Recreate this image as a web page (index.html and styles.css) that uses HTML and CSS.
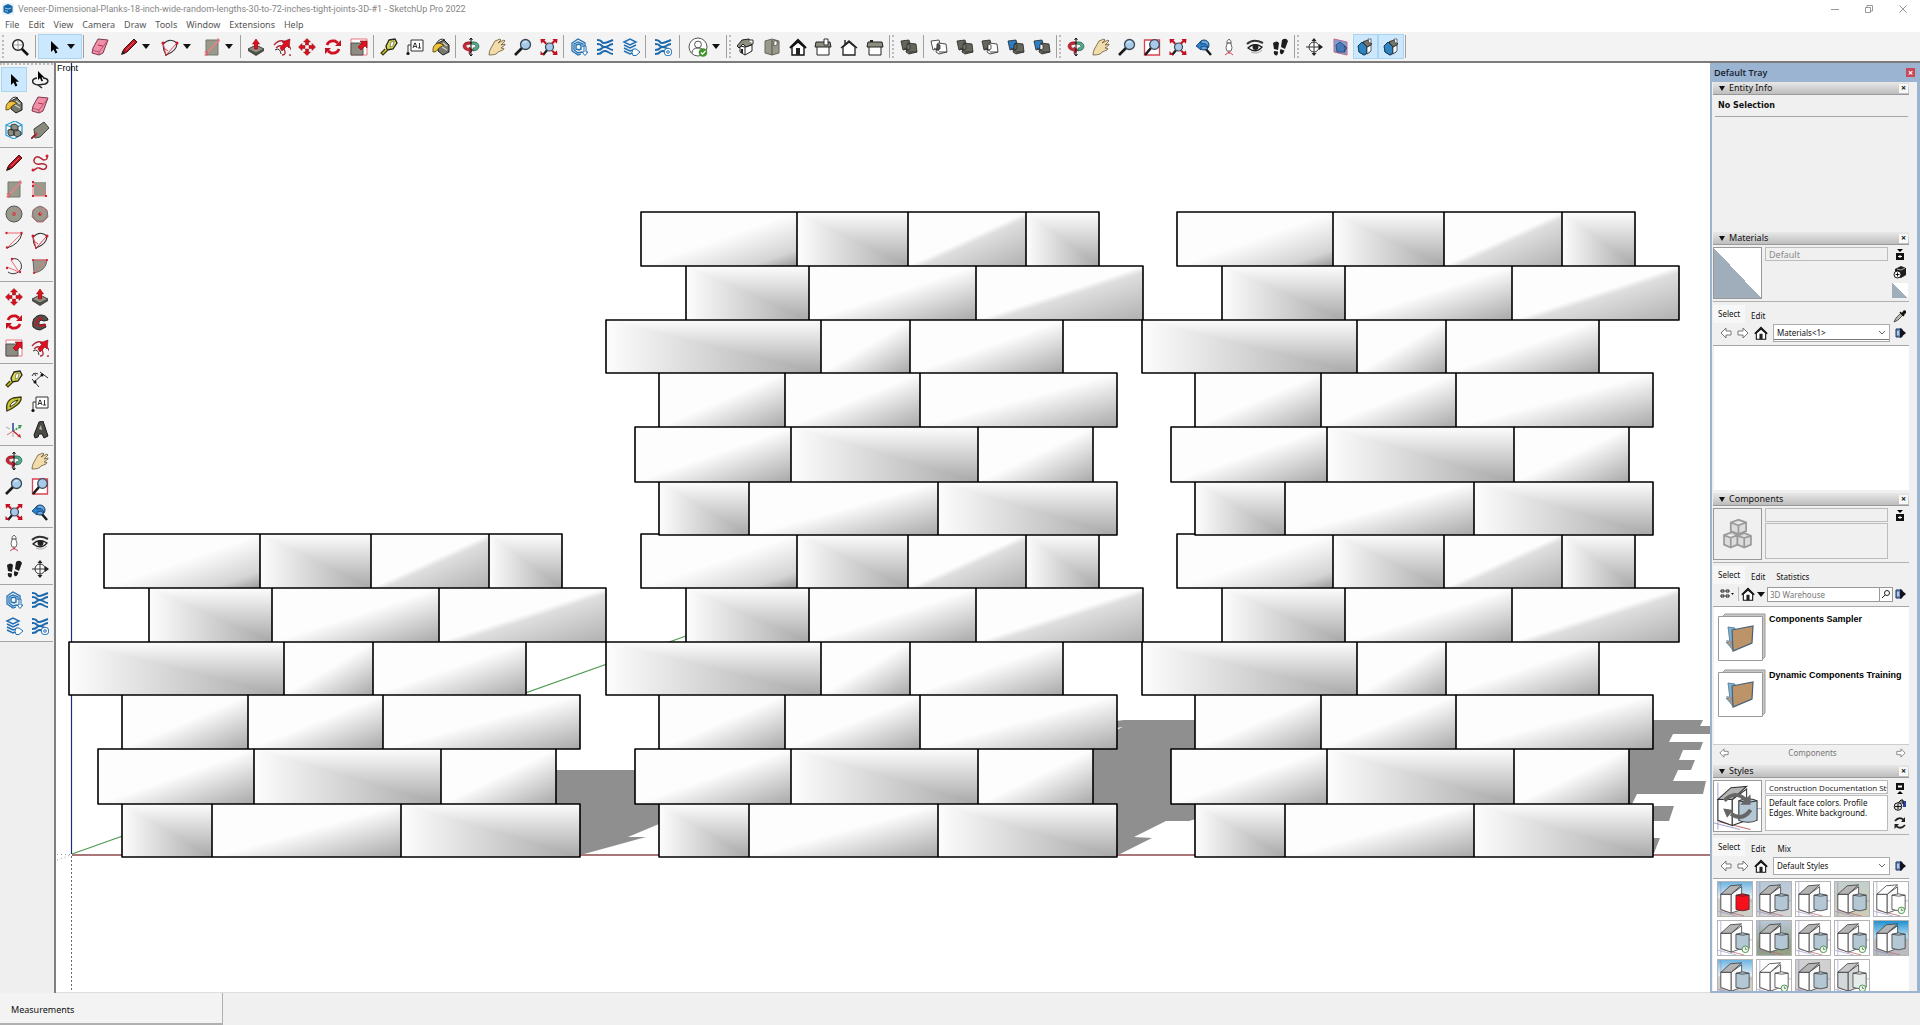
FILE: index.html
```html
<!DOCTYPE html>
<html lang="en">
<head>
<meta charset="utf-8">
<title>Veneer-Dimensional-Planks - SketchUp Pro 2022</title>
<link rel="stylesheet" href="styles.css">
</head>
<body>
<svg class="sprite" aria-hidden="true">
  <symbol id="search" viewBox="0 0 18 18"><circle cx="7" cy="7" r="5.3" fill="#fff" stroke="#222" stroke-width="1.5"/><path d="M7 3v8M3 7h8" stroke="#888" stroke-width=".8"/><path d="M11 11l6 6" stroke="#111" stroke-width="2.6"/></symbol>
  <symbol id="cursor" viewBox="0 0 18 18"><path d="M6 3v11l2.600-2.400 1.800 4 2-1-1.800-3.800H14z" fill="#000"/></symbol>
  <symbol id="lasso" viewBox="0 0 18 18"><path d="M6 7C0 8 0 13 7 14l7-1c5-2 3-6-2-6M7 14l4 3" fill="none" stroke="#222" stroke-width="1.500"/><path d="M7 0v9l2-2 1.500 3.500 1.500-.7L10.500 6.500h3z" fill="#000"/></symbol>
  <symbol id="eraser" viewBox="0 0 18 18"><path d="M7 1l10 1-5 13-4 2-7-2 1-5z" fill="#f08fa8" stroke="#7c3a4c"/><path d="M1 12l7 2 9-12M8 14v3" fill="none" stroke="#a34d64" stroke-width=".8"/><path d="M7 7l5 1" stroke="#b03050"/></symbol>
  <symbol id="pencil" viewBox="0 0 18 18"><path d="M2 16l2-5L14 1l3 3L7 14z" fill="#c01522" stroke="#421010"/><path d="M1 17l1.500-4.500 3 3z" fill="#2b2018"/><path d="M6 12l8-8" stroke="#f07070" stroke-width=".8"/></symbol>
  <symbol id="free" viewBox="0 0 18 18"><path d="M2 16c2 1 3-3 6-2s5 3 7 0-2-5-6-4-8-2-5-6 7 2 9 2 4-1 3-4" fill="none" stroke="#b02030" stroke-width="1.400"/><circle cx="2" cy="16" r="1.500" fill="#d02030"/><circle cx="16" cy="2" r="1.500" fill="#d02030"/></symbol>
  <symbol id="arc" viewBox="0 0 18 18"><path d="M2 6Q9-1 16 5Q16 13 5 17Q2 12 2 6" fill="none" stroke="#333" stroke-width="1.100"/><path d="M2 5l3 12L16 5M3 10l4 3" fill="none" stroke="#e04050"/><g fill="#d01828"><circle cx="2" cy="5" r="1.500"/><circle cx="16" cy="5" r="1.500"/><circle cx="5" cy="17" r="1"/></g></symbol>
  <symbol id="rect" viewBox="0 0 18 18"><path d="M3 2h12v15H3z" fill="#99998c" stroke="#77776c"/><path d="M2 17L16 2" stroke="#f08088" stroke-width="1.300"/><path d="M1.500 14h3v3h-3M14 1h2v3" fill="none" stroke="#e05060" stroke-width=".8"/></symbol>
  <symbol id="rrect" viewBox="0 0 18 18"><path d="M3 2h12v14H3z" fill="#99998c"/><path d="M2 4q11 2 12 12M2 2v14h13" fill="none" stroke="#ee7780"/><path d="M1 1h2v2H1zM1 15h2v2H1zM14 15h2v2h-2zM1 5h2v2H1z" fill="#d02030"/></symbol>
  <symbol id="circ" viewBox="0 0 18 18"><circle cx="9" cy="9" r="8" fill="#99998c" stroke="#555"/><path d="M9 9l5-5" stroke="#f07080"/><circle cx="9" cy="9" r="1.700" fill="#d02030"/><circle cx="9" cy="9" r=".6" fill="#fff"/></symbol>
  <symbol id="poly" viewBox="0 0 18 18"><path d="M9 1l7 4 1 7-5 5H6l-5-5 1-7z" fill="#99998c" stroke="#ec7078"/><circle cx="9" cy="9" r="7.500" fill="none" stroke="#777"/><circle cx="9" cy="9" r="1.700" fill="#d02030"/><path d="M9 9l5-5" stroke="#f07080"/></symbol>
  <symbol id="arc2" viewBox="0 0 18 18"><path d="M17 2Q15 13 2 17" fill="none" stroke="#333"/><path d="M1 2h16L2 17" fill="none" stroke="#ee6a76"/><g fill="#d02030"><circle cx="1.500" cy="2" r="1.200"/><circle cx="16.500" cy="2" r="1.200"/><circle cx="2" cy="16.500" r="1.200"/></g></symbol>
  <symbol id="arc4" viewBox="0 0 18 18"><path d="M7 2c6-2 11 4 9 10-3 5-9 6-13 3" fill="none" stroke="#333"/><path d="M6 3l8 12L2 10" fill="none" stroke="#ee6a76"/><g fill="#d02030"><circle cx="7" cy="2" r="1.200"/><circle cx="15" cy="15" r="1.200"/><circle cx="2" cy="11" r="1.200"/></g></symbol>
  <symbol id="pie" viewBox="0 0 18 18"><path d="M2 3h14Q15 14 3 16z" fill="#99998c" stroke="#666"/><path d="M3 15L16 3M2 3h14" stroke="#ee6a76"/><g fill="#d02030"><circle cx="2" cy="3" r="1.100"/><circle cx="16" cy="3" r="1.100"/><circle cx="3" cy="16" r="1.100"/></g></symbol>
  <symbol id="push" viewBox="0 0 18 18"><path d="M1 11l8-4 8 4-8 4z" fill="#8f8f84" stroke="#444"/><path d="M1 11v2l8 5 8-5v-2l-8 4z" fill="#4b4b44"/><path d="M7.500 11V6H5.500L9 1l3.500 5h-2v5z" fill="#e01020" stroke="#900" stroke-width=".6"/></symbol>
  <symbol id="offset" viewBox="0 0 18 18"><path d="M1 7Q9-2 16 8t0 9M3 10Q8 5 11 11t-2 6" fill="none" stroke="#b02838" stroke-width="1.300"/><path d="M2 12q5-3 6 4" fill="none" stroke="#333"/><path d="M7 10l4-5-2-1 8-3-1 9-2-2-5 5z" fill="#e01020" stroke="#7c0a12" stroke-width=".6"/></symbol>
  <symbol id="move" viewBox="0 0 18 18"><g fill="#d8101e" stroke="#8b0810" stroke-width=".5"><path d="M9 .5L12.500 4H10.500v3h-3V4h-2z"/><path d="M9 17.500L12.500 14H10.500v-3h-3v3h-2z"/><path d="M.5 9L4 5.500v2h3v3H4v2z"/><path d="M17.500 9L14 5.500v2h-3v3h3v2z"/></g></symbol>
  <symbol id="rot" viewBox="0 0 18 18"><path d="M3 7q2-5 8-4l3 2M15 11q-2 5-8 4l-3-2" fill="none" stroke="#d01020" stroke-width="2.800"/><path d="M17 2v6h-6zM1 16v-6h6z" fill="#c01020"/></symbol>
  <symbol id="follow" viewBox="0 0 18 18"><path d="M2 14Q0 4 9 2q7 0 8 5l-4 1-3-1q-3 1-2 5l6-1 1 3-6 3-4-1z" fill="#55504a" stroke="#222"/><path d="M5 13q-1-7 6-8M8 13l7-1" fill="none" stroke="#c41828" stroke-width="1.800"/></symbol>
  <symbol id="scale" viewBox="0 0 18 18"><path d="M1 1h16v16H1z" fill="#fff" stroke="#e87880"/><path d="M1 5h12v12H1z" fill="#8c8c80" stroke="#555"/><path d="M8 9l4-4-2-2h7v7l-2-2-4 4z" fill="#e01020" stroke="#7c0a12" stroke-width=".6"/></symbol>
  <symbol id="tape" viewBox="0 0 18 18"><path d="M9 2l6-1 2 4-4 6-6 1-1-4z" fill="#d9d84a" stroke="#222" stroke-width="1.300"/><path d="M11 4l3-1-1 5-3 1z" fill="#fff" stroke="#555" stroke-width=".6"/><path d="M5 11l-4 4 2 2 5-5" stroke="#3d3a10" stroke-width="1.200" fill="#c5bd30"/></symbol>
  <symbol id="text" viewBox="0 0 18 18"><path d="M5 2h12v11H5zM2 16V7h3" fill="#fff" stroke="#333"/><circle cx="2" cy="15.500" r="1.600" fill="#111"/><path d="M7 10l1.700-5h.6L11 10M7.500 8.500h3M13.500 5v5M12 10h3" fill="none" stroke="#222" stroke-width=".9"/></symbol>
  <symbol id="paint" viewBox="0 0 18 18"><path d="M6 5l6-3 5 5v7l-6 3-5-4z" fill="#77786d" stroke="#1c1c1c"/><path d="M1 14q-1-8 6-9l5 2-5 3q-3 5-6 4z" fill="#f0c13a" stroke="#4a3a08" stroke-width=".8"/><path d="M4 6q4-7 9-4" fill="none" stroke="#222"/><path d="M10 9l5 3M11 5l4 3" stroke="#d4d4c8" stroke-width="1.200"/></symbol>
  <symbol id="orbit" viewBox="0 0 18 18"><path d="M9 4Q2 3 1 8q0 4 6 5v3l4-4-4-3v2Q3 9 4 7l5-1z" fill="#d02334" stroke="#5a0a10" stroke-width=".5"/><path d="M9 4q8-1 8 5-1 4-6 4v-3q3 0 3-2t-5-2z" fill="#54ac8a" stroke="#124a38" stroke-width=".6"/><path d="M9 0v18M7.500 2L9 0l1.500 2M7.500 16L9 18l1.500-2" fill="none" stroke="#111"/></symbol>
  <symbol id="hand" viewBox="0 0 18 18"><path d="M1 17q0-4 2-7l4-7 5-2 1 1-3 3 6-3 1 1-4 4 4-1v1l-4 3 3 .5-1 1.500-5 2q-1 3-9 3z" fill="#f3dcab" stroke="#6b5838" stroke-width=".8"/></symbol>
  <symbol id="zoom" viewBox="0 0 18 18"><path d="M8 10l-7 7" stroke="#1a1a1a" stroke-width="2.600"/><circle cx="11.500" cy="6.500" r="5" fill="#a9c9e8" stroke="#384858" stroke-width="1.300"/><path d="M9 5q2-2 4-1" stroke="#e8f4ff" fill="none"/></symbol>
  <symbol id="zwin" viewBox="0 0 18 18"><path d="M1.500 2h15v15h-15z" fill="#fff" stroke="#d84450" stroke-width="1.300"/><path d="M8 10l-6 7" stroke="#1a1a1a" stroke-width="2.600"/><circle cx="11.500" cy="6.500" r="4.800" fill="#a9c9e8" stroke="#384858" stroke-width="1.300"/></symbol>
  <symbol id="zext" viewBox="0 0 18 18"><path d="M8 11l-5 6" stroke="#1a1a1a" stroke-width="2.200"/><circle cx="9.500" cy="9" r="4" fill="#a9c9e8" stroke="#384858" stroke-width="1.200"/><path d="M.5 1h5L4.500 2.500 7 5 5.500 6.500 3 4 1 5.500zM17.500 1h-5l1 1.500L11 5l1.500 1.500L15 4l2 1.500zM17.500 17h-5l1-1.500-2-2 1.500-1.500 2 2 2-1.500zM.5 13v4h4z" fill="#c41020"/></symbol>
  <symbol id="prev" viewBox="0 0 18 18"><path d="M10 10l6 7" stroke="#1a1a1a" stroke-width="2.400"/><circle cx="9" cy="7" r="5" fill="#68a8e0" stroke="#123c66"/><path d="M1 8l5-5v3q6-2 7 4-3-3-7-1v3z" fill="#2a80cc" stroke="#123c66" stroke-width=".8"/></symbol>
  <g id="waves"><path d="M1 2q4 0 5 2t6 0 5-2M1 6q4 0 5 2 3 2 6 0t5-2M1 12q4 0 5-2 3-2 6 0t5 2M1 16q4 0 5-2 3-2 6 0t5 2" fill="none" stroke="#1c68ad" stroke-width="1.900"/></g>
  <symbol id="wh" viewBox="0 0 18 18"><path d="M11 16l-3 1-6-4V5l6-4 7 4v4M12 14l-4 1-4-3V6l4-2 5 2v3" fill="none" stroke="#2270b4" stroke-width="1.300"/><path d="M6 7l3-1 2 1v4l-2 1-3-1z" fill="none" stroke="#2270b4" stroke-width="1.400"/><path d="M14 8v6h-2l3 3.500 3-3.500h-2V8z" fill="#fff" stroke="#2270b4"/></symbol>
  <symbol id="ext" viewBox="0 0 18 18"><use href="#waves"/></symbol>
  <symbol id="layers" viewBox="0 0 18 18"><path d="M2 4l6-3 6 3-6 3zM2 7l6 3 6-3M2 10l6 3 3-1M2 13l6 3 2-1" fill="none" stroke="#2270b4" stroke-width="1.500"/><path d="M11 11h3l4 3-4 3.500h-3q-2-3 0-6.500z" fill="#fff" stroke="#2270b4"/></symbol>
  <symbol id="extm" viewBox="0 0 18 18"><use href="#waves"/><circle cx="14" cy="14" r="3.800" fill="#fff" stroke="#2270b4"/><circle cx="14" cy="14" r="1.300" fill="none" stroke="#2270b4"/></symbol>
  <symbol id="user" viewBox="0 0 20 20"><circle cx="10" cy="10" r="9" fill="#fff" stroke="#555"/><circle cx="10" cy="7.500" r="3.400" fill="none" stroke="#555"/><path d="M4 16q0-5 6-5t6 5" fill="none" stroke="#555"/><circle cx="15" cy="15.500" r="4.300" fill="#43962f"/><path d="M13 15.500l1.500 1.700 3-3.200" fill="none" stroke="#fff" stroke-width="1.200"/></symbol>
  <symbol id="iso" viewBox="0 0 18 18"><path d="M3 8l5 1 7-2v6l-7 4-5-3z" fill="#fff" stroke="#222"/><path d="M0 8l5-6 7-1 4 5-7 3-3-3-4 4z" fill="#8d8d80" stroke="#222"/><path d="M11 2h5v4" fill="#fff" stroke="#333"/><path d="M5 11v4" stroke="#222" stroke-width="2"/><path d="M8 9v8" stroke="#222"/></symbol>
  <symbol id="top" viewBox="0 0 18 18"><path d="M2 3l7-2 7 2v12l-7 2-7-2z" fill="#98988b" stroke="#66665c"/><path d="M9 2v15" stroke="#55554c"/><path d="M11 3h3v4l-3 1z" fill="#fff" stroke="#444" stroke-width=".7"/></symbol>
  <symbol id="home" viewBox="0 0 18 18"><path d="M3 9v8h12V9L9 4z" fill="#fff" stroke="#111" stroke-width="1.400"/><path d="M1 10l8-8 8 8" fill="none" stroke="#111" stroke-width="2"/><path d="M7 10h4v7H7z" fill="#222"/></symbol>
  <symbol id="right" viewBox="0 0 18 18"><path d="M3 8h12v9H3z" fill="#fff" stroke="#222"/><path d="M2 4h14l1 5H1z" fill="#8d8d80" stroke="#222"/><path d="M10 1h4v6h-4z" fill="#fff" stroke="#333"/></symbol>
  <symbol id="back" viewBox="0 0 18 18"><path d="M3 9v8h12V9L9 4z" fill="#fff" stroke="#222" stroke-width="1.300"/><path d="M1 10l8-7 8 7M5 6V2" fill="none" stroke="#222" stroke-width="1.400"/></symbol>
  <symbol id="left" viewBox="0 0 18 18"><path d="M3 8h12v9H3z" fill="#fff" stroke="#222"/><path d="M2 4h14l1 5H1z" fill="#8d8d80" stroke="#222"/><path d="M4 2h3v2H4z" fill="#222"/></symbol>
  <symbol id="solid" viewBox="0 0 18 18"><path d="M1 3l8-1 2 8-8 2z" style="fill:var(--a,#66665c)" stroke="#222" stroke-width=".8"/><path d="M8 5l8 1 1 8-8 2-3-2z" style="fill:var(--b,#66665c)" stroke="#222" stroke-width=".8"/><path d="M7 6l3 1v4l-3 1z" style="fill:var(--c,#77776c)" stroke="#333" stroke-width=".8"/><path d="M9 14h8M4 10l5 3" stroke="#333" stroke-width=".9"/></symbol>
  <symbol id="cam" viewBox="0 0 18 18"><path d="M9 1q3 2 2 5 2 4 0 7H7Q5 10 7 6 6 3 9 1z" fill="#fff" stroke="#444" stroke-width=".8"/><path d="M7 5h4" stroke="#333"/><path d="M9 13v3M5 17l4-3 4 3" stroke="#d04050" fill="none"/></symbol>
  <symbol id="eye" viewBox="0 0 18 18"><path d="M1 6Q7 0 17 5" fill="none" stroke="#333" stroke-width="2"/><path d="M2 10q6-6 14-1-6 7-14 1z" fill="#fff" stroke="#222" stroke-width="1.300"/><circle cx="9.500" cy="9" r="3" fill="#222"/><path d="M5 14q6 3 11-2" fill="none" stroke="#aaa"/></symbol>
  <symbol id="feet" viewBox="0 0 18 18"><path d="M2 5q4-3 6 0l-1 7-4-1zM3 13l4 .5Q7 18 5 17.500 2 17 3 13zM11 2q4-3 6 1l-3 8-4-2zM9.500 11l4 1.500Q12 17 10 16q-2-1-.5-5z" fill="#1d1d1d"/></symbol>
  <symbol id="target" viewBox="0 0 18 18"><circle cx="9" cy="9" r="5" fill="#fff" stroke="#333"/><path d="M1 9h16M9 2v14" stroke="#333"/><path d="M9 0l2.500 3h-5zM9 18l2.500-3h-5zM18 9l-4-3v6z" fill="#222"/></symbol>
  <symbol id="splane" viewBox="0 0 18 18"><path d="M3 1l13 3v13L3 14z" fill="#7d9fd4" stroke="#c06a86"/><path d="M5 7l4-3 5 4v6H6z" fill="#4a79b8" stroke="#25446e" stroke-width=".8"/><path d="M13 8l3 2-3 3" fill="none" stroke="#25446e"/></symbol>
  <symbol id="shouse" viewBox="0 0 18 18"><path d="M3 7l6-4 5 3v8l-6 3-5-3z" fill="#eee" stroke="#222" stroke-width=".8"/><path d="M2 8l4-4 5 5v6l-3 2-5-3z" fill="#2f83bf" stroke="#123a5a"/><path d="M11 9l4-2v6l-4 3z" fill="#fff" stroke="#222" stroke-width=".7"/><path d="M7 4l5-2 4 4-5 3z" fill="#77776c" stroke="#222" stroke-width=".8"/><path d="M12 1h3v4h-2z" fill="#fff" stroke="#333" stroke-width=".7"/></symbol>
  <symbol id="comp" viewBox="0 0 18 18"><path d="M1 4l9-4 7 4v9l-8 5-8-4zM1 4l8 3 8-3" fill="none" stroke="#2f9fd8" stroke-width="1.300"/><path d="M6 4l4-1 3 2v4H6zM3 9l4-1 2 2v4l-4 1-2-2zM9 10l4-1 3 2v3l-4 2-3-2z" fill="#8a8d84" stroke="#222" stroke-width=".8"/></symbol>
  <symbol id="tag" viewBox="0 0 18 18"><path d="M3 8L13 1l5 6-9 9-5 1z" fill="#89897c" stroke="#44443c"/><path d="M0 18l5-5" stroke="#901828" stroke-width="1.800"/><circle cx="5" cy="13" r="1.600" fill="#b04050"/></symbol>
  <symbol id="dim" viewBox="0 0 18 18"><path d="M3 12L11 5M1 9l7 8M9 2l8 6" stroke="#333"/><path d="M1 6l2-3 2 3M4 3l3 1" fill="none" stroke="#333"/><circle cx="4" cy="12" r="1.500" fill="#111"/><circle cx="11" cy="5" r="1.500" fill="#111"/></symbol>
  <symbol id="protr" viewBox="0 0 18 18"><path d="M2 16Q0 6 8 3l8-1q1 4-4 8t-10 6z" fill="#c8c63c" stroke="#3a3a10" stroke-width="1.300"/><path d="M5 12q0-5 8-7-2 4-8 7z" fill="#fff" stroke="#3a3a10"/></symbol>
  <symbol id="axes" viewBox="0 0 18 18"><path d="M8 2v8" stroke="#2a4d9c" stroke-width="1.600"/><path d="M8 10l-6 4" stroke="#d06a78"/><path d="M8 10l7-4" stroke="#3a9a5a" stroke-dasharray="2 1" stroke-width="1.600"/><path d="M8 10l5 4" stroke="#c02030" stroke-width="1.500"/><path d="M12 15l4 2-1-4z" fill="#c02030"/><path d="M13 4h4l-2 4z" fill="#3a9a5a"/><path d="M8 12v4M1 6l4 2" stroke="#888" stroke-width=".7"/></symbol>
  <symbol id="t3d" viewBox="0 0 18 18"><path d="M3 14L8 1l4-1 5 15-4 2-2-4H8l-1 3-3 1z" fill="#4c4c46" stroke="#1c1c1c"/><path d="M8 8l2-4 1 5z" fill="#b9b9ae"/></symbol>
  <symbol id="aleft" viewBox="0 0 12 12"><path d="M1 6l5-5v3h5v4H6v3z" fill="#fff" stroke="#777"/></symbol>
  <symbol id="aright" viewBox="0 0 12 12"><path d="M11 6L6 1v3H1v4h5v3z" fill="#fff" stroke="#777"/></symbol>
  <symbol id="export" viewBox="0 0 12 12"><path d="M1 2h6v8H1z" fill="#6b93c4" stroke="#1a3058"/><path d="M5 1l6 5-6 5z" fill="#10131c"/><path d="M3 4v4" stroke="#fff"/></symbol>
  <symbol id="pane" viewBox="0 0 12 12"><path d="M3 0h6L6 3z" fill="#000"/><path d="M2 4h8v7H2z" fill="#111"/><path d="M4 7.500h4M6 6v3" stroke="#fff"/></symbol>
  <symbol id="pane2" viewBox="0 0 12 12"><path d="M3 12h6L6 9z" fill="#000"/><path d="M2 1h8v7H2z" fill="#111"/><path d="M4 4.500h4" stroke="#fff" stroke-width="2"/></symbol>
  <symbol id="mknew" viewBox="0 0 14 14"><path d="M2 4l6-3 5 2v7l-5 3-6-2z" fill="#1e1e1e"/><path d="M4 4l4 1 4-2" stroke="#aaa" fill="none"/><circle cx="4.500" cy="9.500" r="3.500" fill="#fff" stroke="#111"/><path d="M2.500 9.500h4M4.500 7.500v4" stroke="#111"/></symbol>
  <symbol id="stnew" viewBox="0 0 14 14"><path d="M10 3h3v6h-3z" fill="#2a3fa0"/><path d="M5 5l3-3h2v4" stroke="#111" fill="#888"/><circle cx="5" cy="8.500" r="3.800" fill="#ddd" stroke="#111"/><path d="M2 8.500h6M5 5.500v6" stroke="#111"/></symbol>
  <symbol id="sync" viewBox="0 0 14 14"><path d="M2 5q4-5 9-1M12 9q-4 5-9 1" fill="none" stroke="#222" stroke-width="1.800"/><path d="M12 1v5H8zM1.500 13V8H6z" fill="#222"/></symbol>
  <symbol id="dropper" viewBox="0 0 14 14"><path d="M1 13l2-4 5-5 2 2-5 5z" fill="#b9b9a8" stroke="#333" stroke-width=".8"/><path d="M7 3l4 4" stroke="#111" stroke-width="1.500"/><path d="M8 5l3-4 2 1 0 2-3 3z" fill="#111"/></symbol>
  <symbol id="grid4" viewBox="0 0 14 12"><path d="M1 2h3v2H1zM6 2h3v2H6zM1 7h3v2H1zM6 7h3v2H6z" fill="none" stroke="#222"/><path d="M11 5h3l-1.500 2z" fill="#222"/></symbol>
  <symbol id="folder" viewBox="0 0 48 48"><path d="M4 4l3-3h40v43l-3 3z" fill="#c8c8c8" stroke="#999"/><path d="M.5 3.500h44v44H.5z" fill="#fff" stroke="#999"/><path d="M10 14l7 1v5l-1 18-8-9 4 1z" fill="#7fb4d4" stroke="#47718c" stroke-width=".8"/><path d="M8 27l6 10v-9z" fill="#999"/><path d="M14 17l21-4-1 17-19 8z" fill="#bd9468" stroke="#44607a" stroke-width="1.200"/></symbol>
  <symbol id="cubes" viewBox="0 0 48 52"><g fill="#dcdcdc" stroke="#9a9a9a" stroke-width="1.800"><path d="M17 14l8-3 8 3v9l-8 3-8-3zM17 14l8 3 8-3M25 17v9"/><path d="M10 27l8-3 6 3v10l-7 3-7-3zM10 27l7 3 7-3M17 30v10"/><path d="M24 28l7-3 7 3v9l-7 3-7-3zM24 28l7 2 7-2M31 30v10"/></g></symbol>
  <symbol id="style" viewBox="0 0 36 36"><path d="M3 0v36M0 31l20 5M28 20h8" stroke="#8889c0" stroke-width=".6"/><path d="M4 30l24 6" stroke="#c06a70" stroke-width=".8"/><g stroke="#333" stroke-width=".8"><path d="M3 13h11v20l-11-4z" style="fill:var(--wall,#fff)"/><path d="M14 13L25 5v24l-11 4z" style="fill:var(--wall,#fafafa)"/><path d="M3 13L13 4l12-1-11 10z" style="fill:var(--roof,#b4b4b4)"/><path d="M19 14q7-3 14 0v15q-7 3-14 0z" style="fill:var(--cyl,#b4c7d4)"/><path d="M19 14q7 2 14 0" fill="none"/></g><g style="display:var(--clock,none)"><circle cx="29" cy="30" r="3.500" fill="#f2f8ee" stroke="#4b8f4b"/><path d="M29 28v2h2" stroke="#4b8f4b" fill="none"/></g></symbol>
  <symbol id="swap" viewBox="0 0 36 36"><path d="M8 14q8-9 17 0M28 21q-6 9-15 3" fill="none" stroke="#666" stroke-width="3"/><path d="M28 9v8h-8zM7 20l8 1-5 6z" fill="#666"/></symbol>
</svg>

<div class="app">
<header class="titlebar">
  <svg class="logo" viewBox="0 0 12 12"><rect width="12" height="12" rx="1" fill="#e8f1f8"/><path d="M6 1l4.500 2v6L6 11 1.500 9V3z" fill="#1668a8"/><path d="M3 5l3 1 3-1M3 7.500l3 1" stroke="#9cc6e4" fill="none"/></svg>
  <h1>Veneer-Dimensional-Planks-18-inch-wide-random-lengths-30-to-72-inches-tight-joints-3D-#1 - SketchUp Pro 2022</h1>
  <div class="winbtns">
    <button aria-label="Minimize"><svg viewBox="0 0 8 8"><path d="M0 4.500h8"/></svg></button>
    <button aria-label="Restore"><svg viewBox="0 0 8 8"><path d="M.5 2.500h5v5h-5zM2 2V.5h5.500V6H6"/></svg></button>
    <button aria-label="Close"><svg viewBox="0 0 8 8"><path d="M.5.5l7 7M7.500.5l-7 7"/></svg></button>
  </div>
</header>
<nav class="menubar">
  <button>File</button><button>Edit</button><button>View</button><button>Camera</button><button>Draw</button><button>Tools</button><button>Window</button><button>Extensions</button><button>Help</button>
</nav>

<div class="toolbar">
  <div class="tg g-one grip"><button><svg><use href="#search"/></svg></button></div>
  <div class="tg g-select"><button class="split on"><svg><use href="#cursor"/></svg><i class="dd"></i></button></div>
  <div class="tg g-draw"><button><svg><use href="#eraser"/></svg></button><button class="split"><svg><use href="#pencil"/></svg><i class="dd"></i></button><button class="split"><svg><use href="#arc"/></svg><i class="dd"></i></button><button class="split"><svg><use href="#rect"/></svg><i class="dd"></i></button></div>
  <div class="tg g-five"><button><svg><use href="#push"/></svg></button><button><svg><use href="#offset"/></svg></button><button><svg><use href="#move"/></svg></button><button><svg><use href="#rot"/></svg></button><button><svg><use href="#scale"/></svg></button></div>
  <div class="tg g-three"><button><svg><use href="#tape"/></svg></button><button><svg><use href="#text"/></svg></button><button><svg><use href="#paint"/></svg></button></div>
  <div class="tg g-four"><button><svg><use href="#orbit"/></svg></button><button><svg><use href="#hand"/></svg></button><button><svg><use href="#zoom"/></svg></button><button><svg><use href="#zext"/></svg></button></div>
  <div class="tg g-three"><button><svg><use href="#wh"/></svg></button><button><svg><use href="#ext"/></svg></button><button><svg><use href="#layers"/></svg></button></div>
  <div class="tg g-one"><button><svg><use href="#extm"/></svg></button></div>
  <div class="tg g-user"><button class="split"><svg><use href="#user"/></svg><i class="dd"></i></button></div>
  <div class="tg g-six grip"><button><svg><use href="#iso"/></svg></button><button><svg><use href="#top"/></svg></button><button><svg><use href="#home"/></svg></button><button><svg><use href="#right"/></svg></button><button><svg><use href="#back"/></svg></button><button><svg><use href="#left"/></svg></button></div>
  <div class="tg g-shell grip"><button><svg><use href="#solid"/></svg></button></div>
  <div class="tg g-five"><button><svg class="s-cut"><use href="#solid"/></svg></button><button><svg><use href="#solid"/></svg></button><button><svg class="s-mid"><use href="#solid"/></svg></button><button><svg class="s-blue"><use href="#solid"/></svg></button><button><svg class="s-blue2"><use href="#solid"/></svg></button></div>
  <div class="tg g-nine grip"><button><svg><use href="#orbit"/></svg></button><button><svg><use href="#hand"/></svg></button><button><svg><use href="#zoom"/></svg></button><button><svg><use href="#zwin"/></svg></button><button><svg><use href="#zext"/></svg></button><button><svg><use href="#prev"/></svg></button><button><svg><use href="#cam"/></svg></button><button><svg><use href="#eye"/></svg></button><button><svg><use href="#feet"/></svg></button></div>
  <div class="tg g-sect grip"><button><svg><use href="#target"/></svg></button><button><svg><use href="#splane"/></svg></button><button class="on"><svg><use href="#shouse"/></svg></button><button class="on"><svg><use href="#shouse"/></svg></button></div>
</div>

<div class="work">
<aside class="tools">
  <div class="vg r3 first"><button class="on"><svg><use href="#cursor"/></svg></button><button><svg><use href="#lasso"/></svg></button><button><svg><use href="#paint"/></svg></button><button><svg><use href="#eraser"/></svg></button><button><svg><use href="#comp"/></svg></button><button><svg><use href="#tag"/></svg></button></div>
  <div class="vg r5"><button><svg><use href="#pencil"/></svg></button><button><svg><use href="#free"/></svg></button><button><svg><use href="#rect"/></svg></button><button><svg><use href="#rrect"/></svg></button><button><svg><use href="#circ"/></svg></button><button><svg><use href="#poly"/></svg></button><button><svg><use href="#arc2"/></svg></button><button><svg><use href="#arc"/></svg></button><button><svg><use href="#arc4"/></svg></button><button><svg><use href="#pie"/></svg></button></div>
  <div class="vg r3"><button><svg><use href="#move"/></svg></button><button><svg><use href="#push"/></svg></button><button><svg><use href="#rot"/></svg></button><button><svg><use href="#follow"/></svg></button><button><svg><use href="#scale"/></svg></button><button><svg><use href="#offset"/></svg></button></div>
  <div class="vg r3"><button><svg><use href="#tape"/></svg></button><button><svg><use href="#dim"/></svg></button><button><svg><use href="#protr"/></svg></button><button><svg><use href="#text"/></svg></button><button><svg><use href="#axes"/></svg></button><button><svg><use href="#t3d"/></svg></button></div>
  <div class="vg r3"><button><svg><use href="#orbit"/></svg></button><button><svg><use href="#hand"/></svg></button><button><svg><use href="#zoom"/></svg></button><button><svg><use href="#zwin"/></svg></button><button><svg><use href="#zext"/></svg></button><button><svg><use href="#prev"/></svg></button></div>
  <div class="vg r2"><button><svg><use href="#cam"/></svg></button><button><svg><use href="#eye"/></svg></button><button><svg><use href="#feet"/></svg></button><button><svg><use href="#target"/></svg></button></div>
  <div class="vg r2"><button><svg><use href="#wh"/></svg></button><button><svg><use href="#ext"/></svg></button><button><svg><use href="#layers"/></svg></button><button><svg><use href="#extm"/></svg></button></div>
</aside>

<main class="viewport">
  <span class="view-name">Front</span>
  <svg class="scene" viewBox="56 63 1654 930" preserveAspectRatio="xMinYMin meet">
    <defs>
      <linearGradient id="gl" x1=".5" y1=".5" x2="1" y2="1"><stop offset="0" stop-color="#fdfdfd"/><stop offset="1" stop-color="#a8a8a8"/></linearGradient>
      <linearGradient id="gs" x1=".5" y1=".5" x2="1" y2="1"><stop offset="0" stop-color="#fdfdfd"/><stop offset=".12" stop-color="#dedede"/><stop offset="1" stop-color="#b0b0b0"/></linearGradient>
      <linearGradient id="gk" x1=".5" y1=".5" x2="1" y2="1"><stop offset="0" stop-color="#fdfdfd"/><stop offset=".7" stop-color="#d4d4d4"/><stop offset="1" stop-color="#999"/></linearGradient>
      <linearGradient id="gv" x1="0" y1="0" x2="0" y2="1"><stop offset="0" stop-color="#fdfdfd"/><stop offset="1" stop-color="#a8a8a8"/></linearGradient>
      <linearGradient id="gh" x1="0" y1="0" x2="1" y2="0"><stop offset="0" stop-color="#fdfdfd"/><stop offset="1" stop-color="#a8a8a8"/></linearGradient>
      <g id="wall">
        <path fill="url(#gk)" d="M104 534h156v54H104z"/>
        <path fill="url(#gs)" d="M371 534h118v54H371z"/>
        <path fill="url(#gl)" d="M272 588h167v54H272z"/>
        <path fill="url(#gs)" d="M439 588h167v54H439z"/>
        <path fill="url(#gl)" d="M284 642h89v53h-89z"/>
        <path fill="url(#gl)" d="M373 642h153v53H373z"/>
        <path fill="url(#gl)" d="M122 695h126v54H122z"/>
        <path fill="url(#gl)" d="M248 695h135v54H248z"/>
        <path fill="url(#gl)" d="M383 695h197v54H383z"/>
        <path fill="url(#gl)" d="M98 749h156v55H98z"/>
        <path fill="url(#gl)" d="M441 749h115v55H441z"/>
        <path fill="url(#gl)" d="M212 804h189v53H212z"/>
        <g fill="url(#gh)"><path d="M260 534h111v54H260z"/><path d="M489 534h73v54h-73z"/><path d="M149 588h123v54H149z"/><path d="M69 642h215v53H69z"/><path d="M254 749h187v55H254z"/><path d="M122 804h90v53h-90z"/><path d="M401 804h179v53H401z"/></g>
        <g fill="url(#gv)"><path d="M260 534h111v54z"/><path d="M489 534h73v54z"/><path d="M149 588h123v54z"/><path d="M69 642h215v53z"/><path d="M254 749h187v55z"/><path d="M122 804h90v53z"/><path d="M401 804h179v53z"/></g>
        <path fill="none" stroke="#000" stroke-width="1.600" stroke-linejoin="round" d="M104 534h458v54H104zM260 534v54M371 534v54M489 534v54M149 588h457v54H149zM272 588v54M439 588v54M69 642h457v53H69zM284 642v53M373 642v53M526 642h80M122 695h458v54H122zM248 695v54M383 695v54M98 749h458v55H98zM254 749v55M441 749v55M122 804h458v53H122zM212 804v53M401 804v53"/>
      </g>
    </defs>
    <path d="M71.500 63v791" stroke="#1f2a78" stroke-width="1.200"/>
    <path d="M71.500 856v137" stroke="#667" stroke-dasharray="2 2"/>
    <path d="M57 854.500h14M57 860l14-5" stroke="#999" stroke-dasharray="1 3"/>
    <path d="M72 854l614-218" stroke="#4d9a50" stroke-width="1.200"/>
    <g fill="#8f8f8f">
      <path d="M556 770h80v34h23v20l-31 13h18l-62 17h-28z"/>
      <path d="M1092 749h24v-28l8-1h72v99l-7 2h-23l-32 16 18 1-32 16h-28z"/>
      <path d="M1628 720h75l-3 6h11v8h-38l-4 8h34l-3 8h-17l-4 10h16l-4 10h-13l-5 11h33l-3 13h-66l-5 10h-4zM1652 806h22l-5 15h-17zM1652 838h8l-6 15h-2z"/>
    </g>
    <path d="M1116 728l7-1-7 3z" fill="#fff"/>
    <path d="M72 855h1639" stroke="#8e4a4c" stroke-width="1.400"/>
    <use href="#wall"/>
    <use href="#wall" x="537"/><use href="#wall" x="537" y="-322"/>
    <use href="#wall" x="1073"/><use href="#wall" x="1073" y="-322"/>
  </svg>
</main>

<aside class="tray">
  <header class="tray-title"><h2>Default Tray</h2><button class="tray-x" aria-label="Close tray">×</button></header>
  <div class="panels">
  <section class="panel entity">
    <header><i class="tri"></i><h3>Entity Info</h3><button aria-label="Close">×</button></header>
    <p class="nosel">No Selection</p>
  </section>
  <section class="panel materials">
    <header><i class="tri"></i><h3>Materials</h3><button aria-label="Close">×</button></header>
    <div class="info">
      <div class="thumb swatch"></div>
      <div class="fields"><input type="text" value="Default" aria-label="Material name" disabled></div>
      <div class="side"><button><svg class="s12"><use href="#pane"/></svg></button><button><svg class="s14"><use href="#mknew"/></svg></button><span class="mini"></span></div>
    </div>
    <div class="tabs"><button class="act">Select</button><button>Edit</button><button class="drop"><svg class="s14"><use href="#dropper"/></svg></button></div>
    <div class="navrow"><button><svg class="s12"><use href="#aleft"/></svg></button><button><svg class="s12"><use href="#aright"/></svg></button><button><svg class="s14"><use href="#home"/></svg></button><select class="underlined" aria-label="Library"><option>Materials&lt;1&gt;</option></select><button><svg class="s12"><use href="#export"/></svg></button></div>
    <div class="list"></div>
  </section>
  <section class="panel components">
    <header><i class="tri"></i><h3>Components</h3><button aria-label="Close">×</button></header>
    <div class="info">
      <div class="thumb"><svg><use href="#cubes"/></svg></div>
      <div class="fields"><input type="text" aria-label="Component name" disabled><textarea aria-label="Component description" disabled></textarea></div>
      <div class="side"><button><svg class="s12"><use href="#pane"/></svg></button></div>
    </div>
    <div class="tabs"><button class="act">Select</button><button>Edit</button><button>Statistics</button></div>
    <div class="navrow search"><button class="view"><svg class="s14"><use href="#grid4"/></svg></button><button><svg class="s14"><use href="#home"/></svg></button><i class="dd"></i><input type="text" placeholder="3D Warehouse" aria-label="Search"><button class="find"><svg viewBox="0 0 10 10" class="s10"><circle cx="6" cy="4" r="2.500" fill="none" stroke="#222"/><path d="M4 6L1 9" stroke="#222"/></svg></button><button><svg class="s12"><use href="#export"/></svg></button></div>
    <ul class="list folders">
      <li><svg><use href="#folder"/></svg><a href="#">Components Sampler</a></li>
      <li><svg><use href="#folder"/></svg><a href="#">Dynamic Components Training</a></li>
    </ul>
    <footer><button><svg class="s10"><use href="#aleft"/></svg></button><span>Components</span><button><svg class="s10"><use href="#aright"/></svg></button></footer>
  </section>
  <section class="panel styles">
    <header><i class="tri"></i><h3>Styles</h3><button aria-label="Close">×</button></header>
    <div class="info">
      <div class="thumb white"><svg><use href="#style"/><use href="#swap"/></svg></div>
      <div class="fields white"><input type="text" value="Construction Documentation Style" aria-label="Style name"><textarea aria-label="Style description">Default face colors. Profile Edges. White background.</textarea></div>
      <div class="side"><button><svg class="s12"><use href="#pane2"/></svg></button><button><svg class="s14"><use href="#stnew"/></svg></button><button><svg class="s14"><use href="#sync"/></svg></button></div>
    </div>
    <div class="tabs"><button class="act">Select</button><button>Edit</button><button>Mix</button></div>
    <div class="navrow"><button><svg class="s12"><use href="#aleft"/></svg></button><button><svg class="s12"><use href="#aright"/></svg></button><button><svg class="s14"><use href="#home"/></svg></button><select aria-label="Style library"><option>Default Styles</option></select><button><svg class="s12"><use href="#export"/></svg></button></div>
    <div class="gallery">
      <button class="sky red"><svg><use href="#style"/></svg></button><button class="slate"><svg><use href="#style"/></svg></button><button><svg><use href="#style"/></svg></button><button class="sand"><svg><use href="#style"/></svg></button><button class="wire clock"><svg><use href="#style"/></svg></button>
      <button class="clock"><svg><use href="#style"/></svg></button><button class="green"><svg><use href="#style"/></svg></button><button class="clock"><svg><use href="#style"/></svg></button><button class="clock"><svg><use href="#style"/></svg></button><button class="deep"><svg><use href="#style"/></svg></button>
      <button class="sky"><svg><use href="#style"/></svg></button><button class="wire clock"><svg><use href="#style"/></svg></button><button class="grey"><svg><use href="#style"/></svg></button><button class="xray clock"><svg><use href="#style"/></svg></button>
    </div>
  </section>
  </div>
</aside>
</div>

<footer class="status"><label for="vcb">Measurements</label><input id="vcb" type="text"></footer>
</div>
</body>
</html>
```
FILE: styles.css
```css
* { box-sizing: border-box; margin: 0; padding: 0; }
body { font: 9px/12px "Noto Sans", "Open Sans", sans-serif; color: #111; background: #f0f0f0; }
button, input, select, textarea { font: inherit; color: inherit; border: 0; background: none; border-radius: 0; }
button { display: flex; align-items: center; justify-content: center; }
svg { display: block; flex: none; }
.sprite { position: absolute; width: 0; height: 0; }
.app { display: flex; flex-direction: column; height: 100vh; overflow: hidden; }

.titlebar { display: flex; align-items: center; height: 17px; padding-left: 2px; background: #fff; color: #858585; }
.titlebar h1 { flex: 1; margin-left: 4px; font: 400 9px/12px Roboto, "Open Sans", sans-serif; }
.logo { width: 12px; height: 12px; }
.winbtns { display: flex; }
.winbtns button { width: 34px; height: 16px; }
.winbtns svg { width: 8px; height: 8px; fill: none; stroke: #999; }

.menubar { display: flex; gap: 9px; height: 15px; padding-left: 5px; background: #fff; color: #555; }
.menubar button { padding: 0; }

.toolbar { display: flex; height: 31px; border-bottom: 2px solid #7c7c7c; background: #f3f3f3; }
.toolbar svg, .tools svg { width: 18px; height: 18px; }
.tg { display: flex; align-items: stretch; padding: 2px; position: relative; }
.tg button { flex: 1; }
.tg::after { content: ""; position: absolute; right: 0; top: 3px; bottom: 3px; width: 1px; background: #a0a0a0; }
.grip { padding-left: 6px; }
.grip::before { content: ""; position: absolute; left: 2px; top: 3px; bottom: 3px; border-left: 2px dotted #bbb; }
.g-one { width: 34px; }
.g-one.grip { width: 36px; }
.g-select { width: 48px; }
.g-draw { width: 157px; }
.g-three { width: 82px; }
.g-four { width: 108px; }
.g-five { width: 133px; }
.g-user { width: 47px; }
.g-six { width: 163px; }
.g-shell { width: 34px; }
.g-nine { width: 238px; }
.g-sect { width: 111px; }
.tg .split { flex: 42; gap: 4px; }
.g-draw button:first-child { flex: 28; }
.toolbar .g-user svg { width: 20px; height: 20px; }
.on { background: #cce8ff; outline: 1px solid #a9d5f0; outline-offset: -1px; }
.dd { flex: none; border: 4px solid transparent; border-top: 5px solid #111; border-bottom: 0; }
.s-cut { --a: #fff; --b: #fff; --c: #555; }
.s-mid { --b: #fff; --c: #fff; }
.s-blue { --a: #2b7fc8; --c: #66665c; }
.s-blue2 { --a: #2b7fc8; --c: #fff; }

.work { flex: 1; display: flex; min-height: 0; }
.tools { width: 56px; border-right: 2px solid #808080; background: #efefef; }
.vg { display: grid; grid-template-columns: 26px 26px; grid-auto-rows: 1fr; padding: 2px 1px; border-bottom: 1px solid #a6a6a6; margin-right: 1px; background: #f3f3f3; }
.vg.first { padding: 2px 1px 4px; border-top: 2px dotted #bbb; }
.r2 { height: 57px; }
.r3 { height: 82px; }
.r5 { height: 134px; }
.first.r3 { height: 85px; }

.viewport { flex: 1; min-width: 0; position: relative; background: #fff; border-bottom: 1px solid #ddd; overflow: hidden; }
.view-name { position: absolute; left: 1px; top: 0; font: 9px/10px "Liberation Sans", sans-serif; color: #000; }
.scene { width: 100%; }

.tray { width: 210px; display: flex; flex-direction: column; border: solid #9ab4d1; border-width: 0 3px 2px 2px; background: #f0f0f0; }
.tray-title { display: flex; align-items: center; justify-content: space-between; height: 19px; padding: 0 2px; background: #9ab4d1; }
.tray-title h2 { font: 600 9px/12px "Open Sans", sans-serif; color: #14202e; }
.tray-x { width: 9px; height: 9px; background: #c9485a; color: #fff; font-weight: 700; line-height: 8px; }
.panels { flex: 1; display: flex; flex-direction: column; min-height: 0; padding: 0 8px 0 1px; }
.panel { display: flex; flex-direction: column; min-height: 0; flex: none; }
.panel > header { display: flex; align-items: center; height: 13px; flex: none; padding: 0 1px 0 6px; background: linear-gradient(#e8e8e8, #bdbdbd); border-bottom: 1px solid #999; }
.panel h3 { flex: 1; margin-left: 4px; font-size: 9px; font-weight: 400; }
.panel > header button { width: 9px; height: 9px; background: #f8f8f8; line-height: 8px; font-weight: 700; }
.tri { border: 3px solid transparent; border-top: 5px solid #111; border-bottom: 0; }
.entity { height: 150px; }
.materials { height: 261px; }
.components { height: 272px; }
.styles { flex: 1; }
.nosel { margin: 0 1px 0 2px; padding: 5px 3px 4px; font: 700 8px/12px "DejaVu Sans", sans-serif; border-bottom: 1px solid #a6a6a6; }

.info { display: flex; height: 57px; flex: none; padding: 2px 0 3px; gap: 3px; border-bottom: 1px solid #b0b0b0; }
.thumb { width: 49px; height: 52px; border: 1px solid #999; flex: none; }
.thumb svg { width: 47px; height: 50px; }
.swatch { background: linear-gradient(to top right, #a0aebb 50%, #fff 50%); }
.fields { width: 123px; display: flex; flex-direction: column; gap: 1px; }
.fields input, .fields textarea { width: 100%; border: 1px solid #bcbcbc; padding: 0 0 0 3px; display: block; }
.fields input { height: 14px; }
.fields textarea { flex: 1; resize: none; overflow: hidden; line-height: 10px; padding: 2px 3px 0; }
.fields :disabled { color: #8a8a8a; }
.white input, .white textarea, .thumb.white { background: #fff; }
.white input { font: 8px/12px "Open Sans", sans-serif; }
.white textarea { font-size: 8px; }
.side { flex: 1; display: flex; flex-direction: column; align-items: center; gap: 4px; padding-top: 2px; }
.mini { width: 16px; height: 16px; background: linear-gradient(to top right, #a0aebb 50%, #fff 50%); }
.s10 { width: 10px; height: 10px; }
.s12 { width: 12px; height: 12px; }
.s14 { width: 14px; height: 14px; }

.tabs { display: flex; align-items: flex-end; height: 21px; flex: none; font-size: 8px; }
.tabs button { height: 15px; min-width: 26px; padding: 0 5px; }
.tabs .act { height: 18px; background: #f7f7f7; }
.tabs .drop { margin-left: auto; padding: 0 2px; min-width: 0; }
.navrow { display: flex; align-items: center; height: 23px; flex: none; gap: 5px; padding: 0 2px 2px 7px; border-bottom: 1px solid #a6a6a6; }
.navrow select { appearance: none; flex: 1; min-width: 0; height: 18px; padding: 0 3px; border: 1px solid #aaa; font-size: 8px; background: #fff url("data:image/svg+xml,%3Csvg xmlns='http://www.w3.org/2000/svg' width='8' height='6'%3E%3Cpath d='M1 1l3 3 3-3' fill='none' stroke='%23666'/%3E%3C/svg%3E") no-repeat right 3px center; }
.navrow .underlined { box-shadow: inset 0 -1px #fff, inset 0 -2px #777; }
.search { gap: 2px; }
.search input { flex: 1; min-width: 0; height: 15px; padding: 0 2px; border: 1px solid #999; background: #fff; font-size: 8px; }
.search ::placeholder { color: #777; opacity: 1; }
.search .find { width: 14px; height: 15px; margin-left: -3px; border: 1px solid #999; background: #fff; }
.search .view { padding-right: 4px; border-right: 1px solid #bbb; }
.list { flex: 1; background: #fff; margin: 0 0 3px 1px; list-style: none; }
.folders { padding: 6px 0 0 4px; margin-bottom: 0; }
.folders li { display: flex; gap: 3px; height: 56px; }
.folders svg { width: 48px; height: 48px; }
.folders a { font: 700 9px/12px "Liberation Sans", sans-serif; color: #000; text-decoration: none; white-space: nowrap; }
.components footer { display: flex; justify-content: space-between; align-items: center; height: 21px; flex: none; padding: 0 3px 4px 6px; border-top: 1px solid #ccc; color: #777; font-size: 8px; }
.gallery { flex: 1; display: grid; grid-template-columns: repeat(5, 36px); grid-auto-rows: 36px; gap: 3px; padding: 2px 0 0 4px; background: #fff; overflow: hidden; min-height: 0; }
.gallery button { border: 1px solid #b4b4b4; background: #fff; }
.gallery svg { width: 34px; height: 34px; }
.gallery .sky { background: linear-gradient(#6fb4e0, #e8f2f8 45%, #cfcfc8 50%); }
.gallery .deep { background: linear-gradient(#1e90d0, #b8def0 45%, #b9bbc0 60%); }
.gallery .slate { background: linear-gradient(#b8c8d8, #d4d4d4); }
.gallery .sand { background: linear-gradient(#c4d0cc, #cfcab8); }
.gallery .green { background: linear-gradient(#b9c6d6, #93a283 70%); }
.gallery .grey { background: #d0d0d0; }
.red { --cyl: #f5101c; }
.wire { --cyl: #fff; --roof: #fff; }
.xray { --roof: #c8c8c8; --wall: #d4d8da; --cyl: #e6ecea; }
.clock { --clock: block; }

.status { display: flex; align-items: center; height: 32px; width: 223px; padding: 3px 0 0 11px; background: #f3f3f3; border: solid #b0b0b0; border-width: 0 1px 2px 0; }
.status input { flex: 1; min-width: 0; }
```
